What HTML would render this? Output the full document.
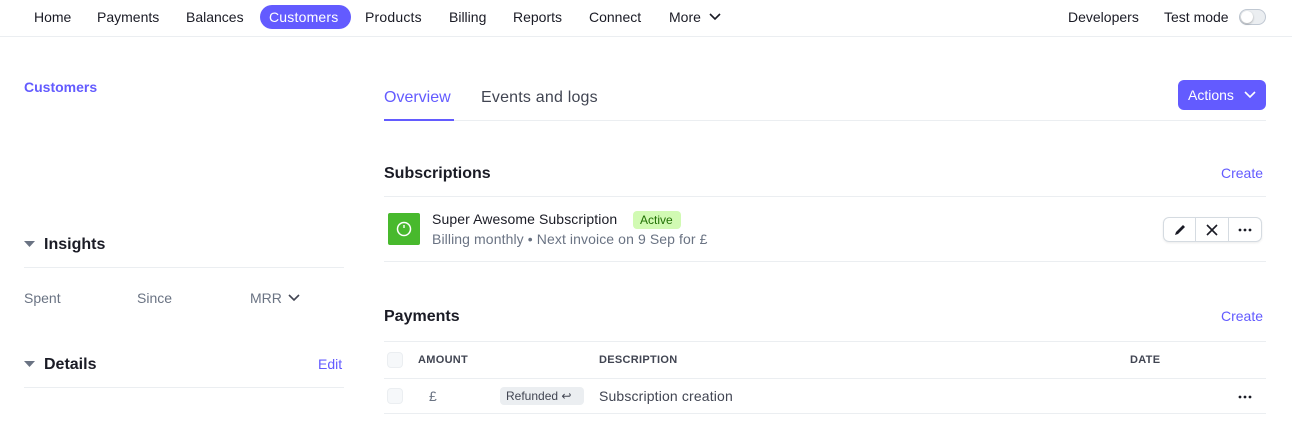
<!DOCTYPE html>
<html><head><meta charset="utf-8"><style>
*{box-sizing:border-box;margin:0;padding:0}
body{width:1292px;height:433px;overflow:hidden;background:#fff;font-family:"Liberation Sans",sans-serif;color:#1a1b25;position:relative}
.a{position:absolute;white-space:nowrap}
.nav{font-size:14px;color:#1a1b25;top:9px}
.hr{position:absolute;height:1px;background:#ebeef1}
.link{color:#635bff}
.h{font-size:16px;font-weight:bold;color:#1a1b25}
.th{font-size:11px;font-weight:bold;color:#414552;letter-spacing:.3px}
.cb{position:absolute;width:16px;height:16px;border:1px solid #ebeef1;border-radius:4px;background:#f6f8fa}
</style></head><body>
<span class="a nav" style="left:34px">Home</span>
<span class="a nav" style="left:97px">Payments</span>
<span class="a nav" style="left:186px">Balances</span>
<div class="a" style="left:260px;top:5px;width:91px;height:24px;border-radius:12px;background:#635bff"></div>
<span class="a nav" style="left:269px;color:#fff;letter-spacing:.2px">Customers</span>
<span class="a nav" style="left:365px;letter-spacing:.2px">Products</span>
<span class="a nav" style="left:449px">Billing</span>
<span class="a nav" style="left:513px">Reports</span>
<span class="a nav" style="left:589px">Connect</span>
<span class="a nav" style="left:669px">More</span>
<svg class="a" style="left:709px;top:12px" width="12" height="10"><path d="M1 2l5 5 5-5" stroke="#1a1b25" stroke-width="1.6" fill="none"/></svg>
<span class="a nav" style="left:1068px">Developers</span>
<span class="a nav" style="left:1164px">Test mode</span>
<div class="a" style="left:1239px;top:9px;width:27px;height:16px;border-radius:8px;border:1px solid #c0c8d2;background:#ebeef1"></div>
<div class="a" style="left:1241px;top:11px;width:12px;height:12px;border-radius:6px;background:#fff;box-shadow:0 1px 2px rgba(0,0,0,.3)"></div>
<div class="hr" style="left:0;top:36px;width:1292px"></div>

<span class="a link" style="left:24px;top:79px;font-size:14px;font-weight:bold">Customers</span>
<svg class="a" style="left:24px;top:240px" width="12" height="8"><path d="M0 1h11L5.5 7z" fill="#6a7383"/></svg>
<span class="a h" style="left:44px;top:236px">Insights</span>
<div class="hr" style="left:24px;top:267px;width:320px"></div>
<span class="a" style="left:24px;top:290px;font-size:14px;color:#6a7383">Spent</span>
<span class="a" style="left:137px;top:290px;font-size:14px;color:#6a7383">Since</span>
<span class="a" style="left:250px;top:290px;font-size:14px;color:#6a7383">MRR</span>
<svg class="a" style="left:288px;top:293px" width="12" height="10"><path d="M1 2l5 5 5-5" stroke="#414552" stroke-width="1.6" fill="none"/></svg>
<svg class="a" style="left:24px;top:360px" width="12" height="8"><path d="M0 1h11L5.5 7z" fill="#6a7383"/></svg>
<span class="a h" style="left:44px;top:356px">Details</span>
<span class="a link" style="left:318px;top:356px;font-size:14px">Edit</span>
<div class="hr" style="left:24px;top:387px;width:320px"></div>

<span class="a link" style="left:384px;top:89px;font-size:16px">Overview</span>
<span class="a" style="left:481px;top:89px;font-size:16px;color:#414552;letter-spacing:.2px">Events and logs</span>
<div class="hr" style="left:384px;top:120px;width:882px"></div>
<div class="a" style="left:384px;top:119px;width:70px;height:2px;background:#635bff"></div>
<div class="a" style="left:1178px;top:80px;width:88px;height:30px;border-radius:6px;background:#635bff"></div>
<span class="a" style="left:1188px;top:87px;font-size:14px;color:#fff">Actions</span>
<svg class="a" style="left:1244px;top:90px" width="12" height="10"><path d="M1 2l5 5 5-5" stroke="#fff" stroke-width="1.6" fill="none"/></svg>

<span class="a h" style="left:384px;top:165px">Subscriptions</span>
<span class="a link" style="left:1221px;top:165px;font-size:14px">Create</span>
<div class="hr" style="left:384px;top:196px;width:882px"></div>
<div class="a" style="left:388px;top:213px;width:32px;height:32px;border-radius:2px;background:#48b92d"></div>
<svg class="a" style="left:395px;top:220px" width="18" height="18"><circle cx="9" cy="9" r="6.5" stroke="#fff" stroke-width="1.5" fill="none"/><path d="M9 5v3" stroke="#fff" stroke-width="1.4"/></svg>
<span class="a" style="left:432px;top:211px;font-size:14px;letter-spacing:.1px">Super Awesome Subscription</span>
<div class="a" style="left:633px;top:211px;width:48px;height:18px;border-radius:4px;background:#d1fab3"></div>
<span class="a" style="left:640px;top:213px;font-size:12px;color:#217005">Active</span>
<span class="a" style="left:432px;top:231px;font-size:14px;color:#6a7383;letter-spacing:.1px">Billing monthly • Next invoice on 9 Sep for £</span>
<div class="a" style="left:1163px;top:217px;width:99px;height:25px;border-radius:6px;border:1px solid #d5dbe1;box-shadow:0 1px 2px rgba(0,0,0,.08)"></div>
<div class="a" style="left:1195px;top:218px;width:1px;height:23px;background:#d5dbe1"></div>
<div class="a" style="left:1228px;top:218px;width:1px;height:23px;background:#d5dbe1"></div>
<svg class="a" style="left:1173px;top:223px" width="14" height="14"><path d="M2 12l1-3 7-7 2 2-7 7z" fill="#1a1b25"/></svg>
<svg class="a" style="left:1206px;top:224px" width="12" height="12"><path d="M1 1l10 10M11 1L1 11" stroke="#1a1b25" stroke-width="1.6"/></svg>
<svg class="a" style="left:1238px;top:228px" width="14" height="4"><circle cx="2" cy="2" r="1.4" fill="#1a1b25"/><circle cx="7" cy="2" r="1.4" fill="#1a1b25"/><circle cx="12" cy="2" r="1.4" fill="#1a1b25"/></svg>
<div class="hr" style="left:384px;top:261px;width:882px"></div>

<span class="a h" style="left:384px;top:308px">Payments</span>
<span class="a link" style="left:1221px;top:308px;font-size:14px">Create</span>
<div class="hr" style="left:384px;top:341px;width:882px"></div>
<div class="cb" style="left:387px;top:352px"></div>
<span class="a th" style="left:418px;top:354px">AMOUNT</span>
<span class="a th" style="left:599px;top:354px">DESCRIPTION</span>
<span class="a th" style="left:1130px;top:354px">DATE</span>
<div class="hr" style="left:384px;top:378px;width:882px"></div>
<div class="cb" style="left:387px;top:388px"></div>
<span class="a" style="left:429px;top:388px;font-size:14px;color:#6a7383">£</span>
<div class="a" style="left:500px;top:387px;width:84px;height:18px;border-radius:4px;background:#ebeef1"></div>
<span class="a" style="left:506px;top:389px;font-size:12px;color:#414552">Refunded ↩</span>
<span class="a" style="left:599px;top:388px;font-size:14px;color:#414552;letter-spacing:.15px">Subscription creation</span>
<svg class="a" style="left:1238px;top:395px" width="14" height="4"><circle cx="2" cy="2" r="1.4" fill="#1a1b25"/><circle cx="7" cy="2" r="1.4" fill="#1a1b25"/><circle cx="12" cy="2" r="1.4" fill="#1a1b25"/></svg>
<div class="hr" style="left:384px;top:413px;width:882px"></div>
</body></html>
